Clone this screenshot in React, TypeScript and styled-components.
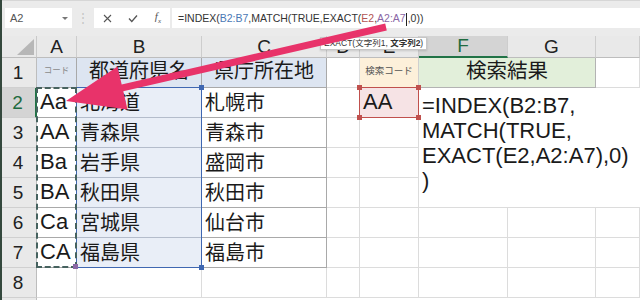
import styled, { createGlobalStyle } from 'styled-components'

const GlobalStyle = createGlobalStyle`
  *, *::before, *::after {
    box-sizing: border-box;
  }
  html, body {
    margin: 0;
    padding: 0;
    background: #ffffff;
  }
  body {
    font-family: "Liberation Sans", "Noto Sans CJK JP", sans-serif;
  }
`

const Window = styled.div`
  position: relative;
  width: 640px;
  height: 300px;
  overflow: hidden;
  background: #ffffff;
`

const EdgeLine = styled.div`
  position: absolute;
  left: 0;
  top: 0;
  bottom: 0;
  width: 2px;
  background: #34483d;
`

const Toolbar = styled.div`
  display: flex;
  align-items: flex-start;
  height: 36px;
  padding: 7px 0 0 5px;
  background: #ebebeb;
  border-top: 1px solid #d6d6d6;
`

const NameBox = styled.div`
  display: flex;
  align-items: center;
  justify-content: space-between;
  width: 67px;
  height: 20px;
  padding: 0 4px 0 5px;
  background: #ffffff;
  font-size: 11px;
  color: #555555;
`

const Caret = styled.span`
  width: 0;
  height: 0;
  border-left: 3px solid transparent;
  border-right: 3px solid transparent;
  border-top: 3px solid #777777;
`

const Grip = styled.div`
  display: flex;
  align-items: center;
  justify-content: center;
  width: 22px;
  height: 20px;
  color: #c4c4c4;
  font-size: 12px;
`

const FxButtons = styled.div`
  display: flex;
  align-items: center;
  justify-content: space-between;
  width: 76px;
  height: 20px;
  padding: 0 9px 0 9px;
  background: #ffffff;
`

const FxLabel = styled.span`
  font-family: "Liberation Serif", serif;
  font-style: italic;
  font-size: 11px;
  color: #555555;

  sub {
    font-size: 7px;
  }
`

const FormulaInput = styled.div`
  flex: 1;
  height: 20px;
  margin-left: 2px;
  padding-left: 6px;
  background: #ffffff;
  font-size: 10.5px;
  line-height: 20px;
  color: #333333;
  white-space: nowrap;
`

const Ref = styled.span<{ $color: string }>`
  color: ${p => p.$color};
`

const TextCursor = styled.span`
  display: inline-block;
  width: 1px;
  height: 13px;
  margin: 0 0.5px;
  background: #222222;
  vertical-align: middle;
`

const Tooltip = styled.div`
  position: absolute;
  left: 320px;
  top: 37px;
  height: 13px;
  padding: 0 3px;
  background: #ffffff;
  border: 1px solid #c6c6c6;
  box-shadow: 0 1px 2px rgba(0, 0, 0, 0.15);
  font-size: 8.5px;
  line-height: 11px;
  color: #333333;
  white-space: nowrap;

  b {
    font-weight: bold;
  }
`

const Sheet = styled.div`
  display: grid;
  grid-template-columns: 37px 40px 125px 125px 33px 59px 89px 88px 44px;
  grid-template-rows: 22px repeat(8, 30px) 6px;
`

const Corner = styled.div`
  grid-row: 1;
  grid-column: 1;
  display: flex;
  align-items: flex-end;
  justify-content: flex-end;
  padding: 0 2px 2px 0;
  background: #e9e9e9;
  border-right: 1px solid #c9c9c9;
  border-bottom: 1px solid #bdbdbd;

  &::after {
    content: '';
    width: 0;
    height: 0;
    border-left: 17px solid transparent;
    border-bottom: 16px solid #b7b7b7;
  }
`

const ColHead = styled.div<{ $c: number; $active?: boolean }>`
  grid-row: 1;
  grid-column: ${p => p.$c};
  display: flex;
  align-items: center;
  justify-content: center;
  background: ${p => (p.$active ? '#d4d4d4' : '#e9e9e9')};
  border-right: 1px solid #cdcdcd;
  border-bottom: ${p => (p.$active ? '2px solid #217346' : '1px solid #bdbdbd')};
  color: ${p => (p.$active ? '#1e6b40' : '#222222')};
  font-size: 19px;
`

const RowHead = styled.div<{ $r: number; $active?: boolean }>`
  grid-row: ${p => p.$r};
  grid-column: 1;
  display: flex;
  align-items: center;
  justify-content: center;
  background: ${p => (p.$active ? '#d4d4d4' : '#e9e9e9')};
  border-right: ${p => (p.$active ? '2px solid #217346' : '1px solid #bdbdbd')};
  border-bottom: 1px solid #d0d0d0;
  color: ${p => (p.$active ? '#1e6b40' : '#222222')};
  font-size: 19px;
`

type CellProps = {
  $r: number
  $c: number
  $cs?: number
  $bg?: string
  $line?: string
  $fs?: number
  $color?: string
  $center?: boolean
}

const Cell = styled.div<CellProps>`
  grid-row: ${p => p.$r};
  grid-column: ${p => p.$c} / span ${p => p.$cs ?? 1};
  display: flex;
  align-items: ${p => (p.$center ? 'center' : 'flex-end')};
  justify-content: ${p => (p.$center ? 'center' : 'flex-start')};
  padding: 0 3px 3px;
  background: ${p => p.$bg ?? '#ffffff'};
  border-right: 1px solid ${p => p.$line ?? '#dcdcdc'};
  border-bottom: 1px solid ${p => p.$line ?? '#dcdcdc'};
  font-size: ${p => p.$fs ?? 20}px;
  line-height: 1.1;
  color: ${p => p.$color ?? '#1a1a1a'};
  white-space: nowrap;
`

const FormulaCell = styled.div`
  grid-row: 3 / span 4;
  grid-column: 7 / span 3;
  padding: 5px 0 0 3px;
  background: #ffffff;
  border-bottom: 1px solid #dcdcdc;
  font-size: 22px;
  line-height: 25px;
  color: #1a1a1a;
  white-space: pre;
`

const Range = styled.div<{ $area: string; $border: string }>`
  grid-area: ${p => p.$area};
  position: relative;
  margin: -1px 0 0 -1px;
  border: ${p => p.$border};
  pointer-events: none;
`

const Handle = styled.span<{ $x: 'l' | 'r'; $y: 't' | 'b'; $color: string }>`
  position: absolute;
  width: 5px;
  height: 5px;
  background: ${p => p.$color};
  ${p => (p.$x === 'l' ? 'left: -3px;' : 'right: -3px;')}
  ${p => (p.$y === 't' ? 'top: -3px;' : 'bottom: -3px;')}
`

const Overlay = styled.svg`
  position: absolute;
  left: 0;
  top: 0;
  pointer-events: none;
`

const TABLE = '#a9a9a9'
const GRID = '#dcdcdc'

const prefectures = [
  ['Aa', '北海道', '札幌市'],
  ['AA', '青森県', '青森市'],
  ['Ba', '岩手県', '盛岡市'],
  ['BA', '秋田県', '秋田市'],
  ['Ca', '宮城県', '仙台市'],
  ['CA', '福島県', '福島市'],
]

const columns = ['A', 'B', 'C', 'D', 'E', 'F', 'G', '']

export default function App() {
  return (
    <Window>
      <GlobalStyle />
      <Toolbar>
        <NameBox>
          A2
          <Caret />
        </NameBox>
        <Grip>⋮</Grip>
        <FxButtons>
          <svg width="9" height="9" viewBox="0 0 9 9">
            <path d="M1 1 L8 8 M8 1 L1 8" stroke="#555" strokeWidth="1.1" />
          </svg>
          <svg width="10" height="9" viewBox="0 0 10 9">
            <path d="M1 4.5 L3.8 7.5 L9 1.5" stroke="#555" strokeWidth="1.3" fill="none" />
          </svg>
          <FxLabel>
            f<sub>x</sub>
          </FxLabel>
        </FxButtons>
        <FormulaInput>
          =INDEX(<Ref $color="#4a78b5">B2:B7</Ref>,MATCH(TRUE,EXACT(
          <Ref $color="#b35553">E2</Ref>,<Ref $color="#8a67a6">A2:A7</Ref>
          <TextCursor />,0))
        </FormulaInput>
      </Toolbar>

      <Sheet>
        <Corner />
        {columns.map((c, i) => (
          <ColHead key={i} $c={i + 2} $active={c === 'F'}>
            {c}
          </ColHead>
        ))}
        {[1, 2, 3, 4, 5, 6, 7, 8].map(n => (
          <RowHead key={n} $r={n + 1} $active={n === 2}>
            {n}
          </RowHead>
        ))}
        <RowHead $r={10} />

        {/* row 1 */}
        <Cell $r={2} $c={2} $bg="#dde5f1" $line={TABLE} $fs={8.5} $color="#8a8a8a" $center>
          コード
        </Cell>
        <Cell $r={2} $c={3} $bg="#dde5f1" $line={TABLE} $center>
          都道府県名
        </Cell>
        <Cell $r={2} $c={4} $bg="#dde5f1" $line={TABLE} $center>
          県庁所在地
        </Cell>
        <Cell $r={2} $c={5} />
        <Cell $r={2} $c={6} $bg="#fdf0da" $line="#cfcfcf" $fs={9.5} $color="#555555" $center>
          検索コード
        </Cell>
        <Cell $r={2} $c={7} $cs={2} $bg="#e2efda" $line="#b3b3b3" $fs={20.5} $center>
          検索結果
        </Cell>
        <Cell $r={2} $c={9} />

        {prefectures.map(([code, pref, city], i) => {
          const r = i + 3
          return [
            <Cell key={`a${r}`} $r={r} $c={2} $line={TABLE} $fs={22}>
              {code}
            </Cell>,
            <Cell key={`b${r}`} $r={r} $c={3} $bg="#e9eef7" $line="#b4bccb">
              {pref}
            </Cell>,
            <Cell key={`c${r}`} $r={r} $c={4} $line={TABLE}>
              {city}
            </Cell>,
            <Cell key={`d${r}`} $r={r} $c={5} />,
            r === 3 ? (
              <Cell key={`e${r}`} $r={r} $c={6} $bg="#f6e3e5" $fs={22}>
                AA
              </Cell>
            ) : (
              <Cell key={`e${r}`} $r={r} $c={6} />
            ),
            ...(r >= 7
              ? [
                  <Cell key={`f${r}`} $r={r} $c={7} />,
                  <Cell key={`g${r}`} $r={r} $c={8} />,
                  <Cell key={`h${r}`} $r={r} $c={9} />,
                ]
              : []),
          ]
        })}

        <FormulaCell>{'=INDEX(B2:B7,\nMATCH(TRUE,\nEXACT(E2,A2:A7),0)\n)'}</FormulaCell>

        {[2, 3, 4, 5, 6, 7, 8, 9].map(c => (
          <Cell key={`r8${c}`} $r={9} $c={c} $line={GRID} />
        ))}

        <Range $area="3 / 3 / 9 / 4" $border="1px solid #3f67b1">
          <Handle $x="r" $y="t" $color="#3f67b1" />
          <Handle $x="r" $y="b" $color="#3f67b1" />
        </Range>
        <Range $area="3 / 2 / 9 / 3" $border="2px dashed #46625f">
          <Handle $x="r" $y="b" $color="#8a67a6" />
        </Range>
        <Range $area="3 / 6 / 4 / 7" $border="1px solid #c0504d">
          <Handle $x="l" $y="t" $color="#c0504d" />
          <Handle $x="r" $y="t" $color="#c0504d" />
          <Handle $x="l" $y="b" $color="#c0504d" />
          <Handle $x="r" $y="b" $color="#c0504d" />
        </Range>
      </Sheet>

      <Tooltip>
        EXACT(文字列1, <b>文字列2</b>)
      </Tooltip>

      <Overlay width="640" height="300" viewBox="0 0 640 300">
        <polygon
          points="385.2,23.6 121.7,84.5 117.5,66.5 66,101 127.5,109.4 123.3,91.3 386.8,30.4"
          fill="#e8336a"
        />
      </Overlay>
      <EdgeLine />
    </Window>
  )
}
